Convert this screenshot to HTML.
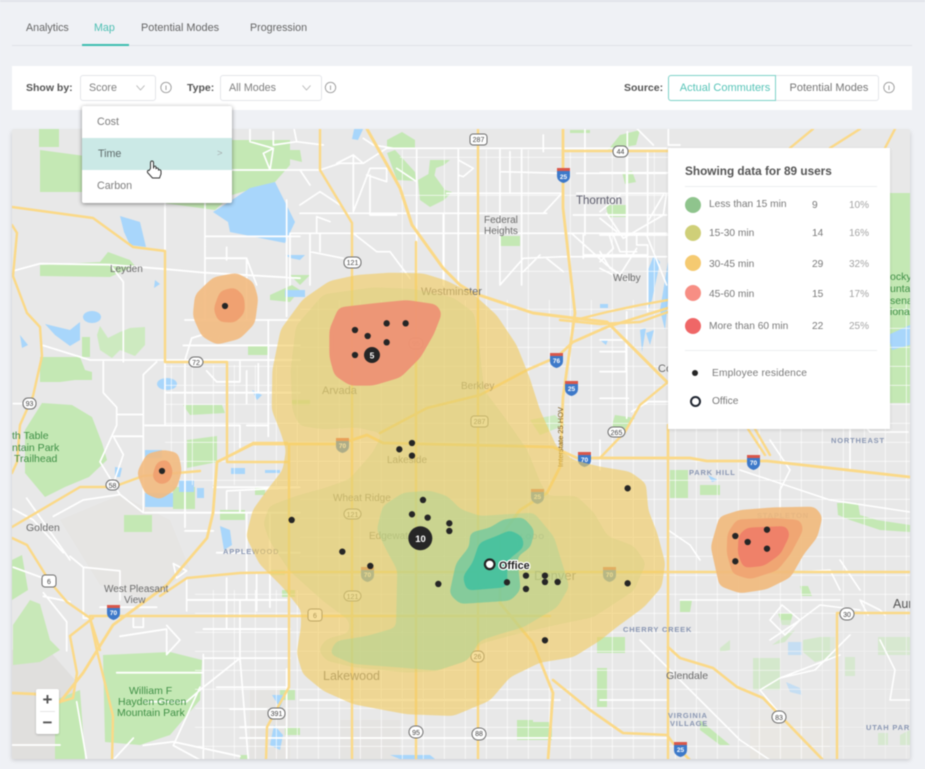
<!DOCTYPE html>
<html lang="en">
<head>
<meta charset="utf-8">
<title>Map</title>
<style>
html,body{margin:0;padding:0;background:#eff1f5;}
#page{position:relative;width:925px;height:769px;overflow:hidden;background:#eff1f5;font-family:"Liberation Sans",sans-serif;color:#666;filter:blur(.5px);}
#page div{position:absolute;white-space:nowrap;}
.topline{left:0;top:0;width:925px;height:2px;background:#e1e4e9;}
.tab{top:21px;font-size:10.7px;line-height:15px;color:#666;}
.tabline{left:12px;top:45px;width:900px;height:1px;background:#dfe2e7;}
.tabactive{left:82px;top:44px;width:47px;height:2px;background:#3dbdb0;}
.bar{left:12px;top:66px;width:900px;height:44px;background:#fff;}
.lbl{font-size:10.5px;font-weight:bold;color:#555;line-height:15px;top:81px;}
.sel{top:75px;height:24px;border:1px solid #e3e5e9;border-radius:3px;background:#fff;font-size:10.7px;line-height:24px;color:#808080;}
.btn{top:75px;height:24px;line-height:24px;font-size:11px;text-align:center;background:#fff;}
.menu{left:82px;top:106px;width:150px;height:97px;background:#fff;border-radius:2px;box-shadow:0 1px 4px rgba(0,0,0,.45);}
.mi{left:0;width:150px;height:32px;line-height:32px;font-size:10.7px;color:#7d7d7d;text-indent:15px;}
.panel{left:668px;top:148px;width:222px;height:281px;background:#fff;box-shadow:0 1px 3px rgba(0,0,0,.12);}
.t{font-size:10.2px;line-height:14px;color:#7a7a7a;}
.p{font-size:10px;line-height:14px;color:#a5a5a5;}
.zoom{left:36px;top:689px;width:23px;height:45px;background:#fff;border-radius:2px;box-shadow:0 1px 2px rgba(0,0,0,.2);}
svg{position:absolute;left:0;top:0;}
.s rect{fill:#fff;stroke:#6d6d6d;stroke-width:1;}
.s text{font-size:7px;fill:#444;text-anchor:middle;font-family:"Liberation Sans",sans-serif;}
.i text{font-size:6.5px;fill:#fff;text-anchor:middle;font-weight:bold;font-family:"Liberation Sans",sans-serif;}
.ml{font-family:"Liberation Sans",sans-serif;font-size:10px;fill:#6b6b6b;}
.hood{font-family:"Liberation Sans",sans-serif;font-size:7.5px;fill:#8a97b3;letter-spacing:.8px;font-weight:bold;}
.park{font-family:"Liberation Sans",sans-serif;font-size:10.5px;fill:#3f8f46;}
</style>
</head>
<body>
<div id="page">
<div class="topline"></div>
<div class="tab" style="left:26px">Analytics</div>
<div class="tab" style="left:94px;color:#4dbfb3">Map</div>
<div class="tab" style="left:141px;font-size:10.9px">Potential Modes</div>
<div class="tab" style="left:250px">Progression</div>
<div class="tabline"></div>
<div class="tabactive"></div>
<div class="bar"></div>
<div class="lbl" style="left:26px">Show by:</div>
<div class="sel" style="left:80px;width:74px;text-indent:8px">Score</div>
<div class="lbl" style="left:187px">Type:</div>
<div class="sel" style="left:220px;width:100px;text-indent:8px">All Modes</div>
<div class="lbl" style="left:624px">Source:</div>
<div class="btn" style="left:776px;width:102px;border:1px solid #e3e5e9;border-left:0;border-radius:0 3px 3px 0;color:#777;text-indent:4px">Potential Modes</div>
<div class="btn" style="left:668px;width:106px;border:1px solid #7fd2c8;border-radius:3px 0 0 3px;color:#57c4b8;text-indent:6px">Actual Commuters</div>

<svg width="925" height="769" viewBox="0 0 925 769" xmlns="http://www.w3.org/2000/svg">
<defs>
<clipPath id="mc"><rect x="12" y="129" width="898" height="630" rx="2"/></clipPath>
<pattern id="g1" width="21" height="19" patternUnits="userSpaceOnUse" x="3" y="5"><path d="M0 0H21M0 0V19" stroke="#fff" stroke-width="1.3" fill="none"/></pattern>
<pattern id="g2" width="42" height="38" patternUnits="userSpaceOnUse" x="24" y="5"><path d="M0 0H42M0 0V38" stroke="#fff" stroke-width="1.3" fill="none"/></pattern>
<filter id="sm" x="-10%" y="-10%" width="120%" height="120%"><feGaussianBlur stdDeviation="10"/><feComponentTransfer><feFuncA type="linear" slope="16" intercept="-7.5"/></feComponentTransfer></filter>
<filter id="shadow" x="-5%" y="-5%" width="110%" height="110%"><feDropShadow dx="0" dy="1" stdDeviation="2" flood-opacity=".18"/></filter>
</defs>

<!-- info icons -->
<g fill="none" stroke="#9a9a9a" stroke-width=".9">
<circle cx="166" cy="87.5" r="5.2"/><circle cx="330.5" cy="87.5" r="5.2"/><circle cx="889" cy="87.5" r="5.2"/>
<path d="M166 85.5V90M330.5 85.5V90M889 85.5V90"/>
<path d="M136.500 85.500L140.500 90L144.500 85.500M302.500 85.500L306.500 90L310.500 85.500" stroke="#b4b4b4"/>
</g>

<rect x="12" y="131" width="898" height="628" fill="#ddd" filter="url(#shadow)"/>
<g clip-path="url(#mc)">
<rect x="12" y="129" width="898" height="630" fill="#e8e8e8"/>
<!-- terrain -->
<path d="M12 650L40 640 75 680 70 759H12Z" fill="#e0dfdd"/>
<path d="M60 520L120 495 170 520 190 570 150 600 100 585Z" fill="#e6e5e3"/>
<rect x="250" y="690" width="40" height="69" fill="#e5e4e2"/>
<rect x="340" y="720" width="60" height="39" fill="#e5e4e2"/>
<rect x="750" y="700" width="80" height="59" fill="#e9e7e3"/>

<!-- green -->
<g fill="#c4e8b4">
<path d="M39 129H59V147H39ZM40 150L85 156 140 155 232 140H290V165L275 182 232 195 215 210 82 192H40Z"/>
<path d="M40 265L100 262 108 252 130 260 135 266 110 277 40 276Z"/>
<path d="M42 403L72 405 92 417 102 443 107 460 89 477 65 487 45 497 25 473 25 430Z"/>
<path d="M100 326L108 338 120 332 130 328 145 327V345L135 356 120 350 112 358 100 350 97 335Z" fill="#cdeac0"/>
<path d="M82 337H90V357H82Z"/>
<path d="M40 357H80L85 370 92 372V380H75L60 382H40Z"/>
<path d="M103 655L170 652 202 660 200 700 170 735 140 745 105 742Z"/>
<path d="M13 625L30 600 40 604 50 640 60 650 40 662 13 665Z" fill="#c8e8b8"/>
<path d="M55 700L80 690 85 759H55Z"/>
<path d="M12 560L22 555 28 590 12 600Z"/>
<path d="M187 440L217 436V462L187 468Z"/>
<path d="M173 487H195V509H173Z"/>
<path d="M124 515H152V532H124Z"/>
<path d="M248 345H268V355H248ZM183 405H222L225 413 190 415Z"/>
<path d="M290 275H310L300 285Z"/>
<!-- north parks -->
<path d="M387 140L402 132 415 140 415 148 387 148ZM387 153L397 180 416 181 415 172 395 150Z"/>
<path d="M418 180L432 172 445 190 452 192 444 200 430 207 420 200Z"/>
<path d="M430 160H450L444 165 436 168 434 178 428 178Z" />
<path d="M276 150H300L302 162 285 158Z"/>
<path d="M500 236H520V246H500Z"/>
<path d="M622 172L632 171 636 182 625 184Z"/>
<path d="M270 295L292 285 300 290 290 302 270 300Z"/>
<path d="M292 400H310V405H292Z"/>
<path d="M615 415L635 418 625 430 610 432Z"/>
<path d="M606 205H627V217H608Z"/>
<path d="M570 130H590V133H570ZM620 135L640 130 636 145 608 150Z"/>
<path d="M530 420L555 415 565 425 540 435Z" opacity=".8"/>
<!-- east -->
<path d="M670 470H688V498H670Z"/>
<path d="M837 503L858 503 860 515 877 520 910 525V532L880 530 850 520 838 515Z"/>
<path d="M800 586H808L812 596H802Z"/>
<path d="M778 613H793L790 625 782 625ZM772 645L790 632 795 630 785 642Z"/>
<path d="M720 648L730 640V650L720 652Z"/>
<path d="M803 640L820 637 835 637V657L815 662 803 652Z"/>
<path d="M753 658H780V690H753Z"/>
<path d="M878 637H910V655H878Z"/>
<path d="M845 657H855V676H845Z"/>
<path d="M700 720L730 745 720 745 700 730Z"/>
<path d="M878 733H888V745H878ZM900 735L910 730V745H900Z"/>
<path d="M890 193H910V403H890Z"/>
<path d="M680 600H692L690 612H680Z"/>
<path d="M597 637H625V653H597ZM597 668H607V707H597Z"/>
<path d="M517 720H533V740H517ZM533 722H552V740H533Z"/>
<path d="M280 690H295V700H280Z"/>
<path d="M285 728H300V735H285ZM240 755H248V759H240Z"/>
<path d="M220 510H245V520H220Z"/>
<path d="M255 488H265V495H255ZM282 590H295V597H282Z"/>
<path d="M700 485H720V495H700Z"/>
<path d="M270 570H285V575H270Z" opacity=".8"/>
</g>

<!-- water -->
<g fill="#a8d6fb">
<path d="M213 212L232 200 250 188 275 182 295 222 285 243 260 238 230 232 228 222Z"/>
<path d="M120 216L140 222 146 247 130 245 124 232Z"/>
<path d="M45 324L70 330 80 322 80 340 70 346 55 335Z"/>
<ellipse cx="92" cy="317" rx="9" ry="6"/>
<ellipse cx="167" cy="384" rx="10" ry="6"/>
<path d="M355 125H365L358 140 352 139Z"/>
<path d="M285 255H305L300 260 290 258Z"/>
<path d="M285 290H305V297H285Z"/>
<path d="M20 335L28 345 22 348Z"/>
<path d="M155 280L160 284 154 288Z"/>
<path d="M145 450H162V458H145ZM115 467L122 468 120 477 115 477ZM145 493H173V507H145ZM179 480H194V492H179ZM197 488H204V498H197Z"/>
<path d="M220 526L230 530 232 545 224 550Z"/>
<path d="M231 468H245V474H231ZM265 470H280V473H265Z"/>
<path d="M660 310L668 262V300L665 330ZM648 270L654 255 660 262 652 300 648 310Z"/>
<path d="M646 333L654 330 650 345ZM640 330L646 328 642 352Z"/>
<path d="M600 304H608V308H600ZM600 340L608 340 606 345Z"/>
<path d="M252 390L262 395 257 400Z"/>
<path d="M788 642H802V655H788ZM786 682L800 688 802 695 790 692Z"/>
<path d="M708 475L718 480 712 482Z"/>
<path d="M272 695H285L280 708ZM274 725L283 735 280 750 270 745Z"/>
<path d="M888 335L910 325V345L892 350Z"/>
<path d="M430 755H390L400 759H435Z"/>
</g>

<!-- white grid -->
<rect x="300" y="300" width="610" height="459" fill="url(#g1)"/>
<rect x="165" y="365" width="135" height="120" fill="url(#g1)"/>
<rect x="195" y="590" width="105" height="169" fill="url(#g1)"/>
<rect x="400" y="150" width="268" height="150" fill="url(#g2)"/>
<rect x="830" y="620" width="80" height="139" fill="#e8e8e8" opacity=".55"/>
<rect x="700" y="620" width="135" height="100" fill="#e8e8e8" opacity=".45"/>

<g fill="none" stroke="#fff" stroke-width="1.6" stroke-linejoin="round" stroke-linecap="round">
<!-- north -->
<g transform="translate(230,125) scale(.3333)" stroke-width="5">
<path d="M0 135H170L270 135 330 115 400 115 470 70H1310M60 0V50L130 70 120 135M130 20V60L200 50 190 0M200 50L280 60M120 135L100 85 130 70M210 135L240 180M320 115L370 90M400 115L370 90M370 90V260L420 130H470V170L410 150M400 40L430 60 490 70M210 240L270 200 330 240M180 325H1310M210 265H950M270 380V325M180 325V480M240 325V480M240 380L340 400M300 290L260 275 260 325M370 325L440 380 480 380 540 460M420 150V270L500 270M500 130L560 170M560 75V480M640 265V480M685 75V480M685 105L730 130 700 155 685 150M810 75V480M840 80V205M875 75V480M650 205H1000M810 140L1000 145M810 390V480L880 400 1000 395H1310M940 30V80M940 265L1000 200M1065 0V330M1190 70V390M1040 145H1310M1040 205H1310M1030 270H1310M1025 325L1130 420 1200 470M1130 265L1180 340 1300 270 1310 205M1060 390H1250M1060 330V400M1250 330L1310 480M950 400L1000 440M0 400H50L80 480M880 440L930 390"/>
</g>
<!-- top right panel side -->
<g transform="translate(600,125) scale(.3333)" stroke-width="5">
<path d="M0 143H205M0 205H205M82 20V330M143 80V330H205M145 0H100L160 60M0 260L60 210M0 330H205M190 210L143 290M110 330V360H143V560M28 330L40 370 0 410M80 560V880M0 645H78V740H0M0 680H80M0 820H85M95 860L145 830 205 830M0 380L30 430 60 450 110 370M0 430L40 450M40 330L60 380H110M0 280L50 320M205 10V60H240"/>
</g>
<!-- west -->
<g transform="translate(0,200) scale(.3333,.3636)" stroke-width="5">
<path d="M40 195L120 175 330 178 495 190 615 200 900 215M495 0V140M615 0V330M860 0V320M615 100H900M615 160H740V330M680 130V165M330 178L370 225 370 445M130 400L270 440H900M310 445V530L350 570V620L300 720M350 590H430M430 860V480L470 445M495 530H900M495 445V620M435 620H720V680M555 445V900M555 530V620M435 860H900M640 790H900M555 330H900M610 370L575 380 555 440M550 400H900M620 470L650 500H720V445M740 470V560M805 330V620M740 620H805V650M775 450V530M680 800V850M720 800V860M430 860L360 810 250 825 160 870M640 910H555M650 970H900M680 800L900 790M340 650H430M340 650L370 700 340 780M300 720L360 810M740 860V1100M810 860V1120M610 1250V1540M610 1260H870M720 1100V1270M610 1180H870M770 1030V1130M680 1040V1180M560 1040V1130M560 1100H860M430 1380H560L610 1340 720 1260M600 1340L520 1500 600 1540M430 1500L520 1490 720 1530M720 1260L745 1540M650 1340H860M690 1400H800M40 850L100 880 190 970M80 820L210 990M250 1010V1150H270M250 1010L360 1020V1100M300 1120H470M210 980L250 1010M130 1080L200 1160 200 1240M210 1105L130 1090M40 1010L130 1040M400 1150V1175H430V1150M500 1170L540 1210 500 1250 500 1180M360 1200L500 1180M520 1000L560 1020 530 1040ZM40 560H70M350 1300H610M230 1380L260 1540M400 1480L340 1540M860 1290V1540M720 1450H860"/>
</g>
<!-- south & east accents -->
<path d="M12 745H60M240 738H668M300 700H560M600 700H668" stroke-width="1.8"/>
<path d="M668 530L690 545 700 560M680 600H840M840 590L830 570 800 572M800 620L820 605 860 610M770 620L782 605 800 620 785 635 770 620ZM770 640L800 620M850 635L815 670 780 678 760 690M780 678L840 655M760 690L785 720M840 560L860 590M868 615L860 600 880 610 885 615M890 700H910M880 640L895 670 890 700M670 670L740 740 770 760M640 640L700 700M740 470L830 500 910 512M770 440L790 470 780 490V515M600 440V470M908 432H870L860 420M850 429V470"/>
</g>

<!-- yellow roads -->
<g fill="none" stroke="#fbd987" stroke-width="2.400" stroke-linejoin="round" stroke-linecap="round">
<path d="M12 207L93 218 133 247 165 251V362H227V462H287"/>
<path d="M12 225L17 233 13 276 27 313 40 327 42 356 33 396 20 425 17 462 12 473"/>
<path d="M12 527L80 487H113L143 476 200 471"/>
<path d="M12 538L27 545 50 582 67 602 90 618 97 651 113 716 112 760"/>
<path d="M12 693L35 694 60 702 83 673 113 625 167 585 207 538 213 513 217 462 253 444H340L367 435 383 443 553 447 577 458H690L707 461H767L910 477" stroke-width="2.800"/>
<path d="M240 450L253 443H287"/>
<path d="M90 616H550"/>
<path d="M160 596L187 578 240 573 300 572H910"/>
<path d="M70 636L93 618M70 636L77 673 73 698 60 702M90 618L100 650"/>
<path d="M289 445V687L267 727 266 760"/>
<path d="M320 129V170L352 223V760"/>
<path d="M367 129L400 188 412 225 443 268 460 285 473 293 533 313 573 318 607 322 667 382" stroke-width="3"/>
<path d="M416 242V760M478 129V760"/>
<path d="M563 129V208L575 313 563 397 560 467 547 493 520 510 500 537V603L533 643 553 693 548 760" stroke-width="2.800"/>
<path d="M563 151H668"/>
<path d="M668 308L607 327 573 342 557 357 527 370 480 395 427 408 380 433" stroke-width="2.600"/>
<path d="M668 312L640 322 600 324 560 320M668 300L640 305 607 312 575 320"/>
<path d="M668 429V760"/>
<path d="M668 647L680 658 713 668 737 687 763 698 823 760M553 680L590 710 623 733 667 735 673 743 690 760" stroke-width="2.600"/>
<path d="M910 613H837V760"/>
<path d="M668 382L640 405 625 432 600 458M668 425L668 460"/>
<path d="M813 129L790 148M860 129L830 148M895 129L885 148"/>
<path d="M748 429L765 455M755 429L770 455"/>
</g>

<!-- map labels -->
<text class="ml" x="576" y="204" style="font-size:11.500px;fill:#5b5b6b">Thornton</text>
<text class="ml" x="613" y="281">Welby</text>
<text class="ml" x="484" y="223">Federal</text>
<text class="ml" x="484" y="234">Heights</text>
<text class="ml" x="110" y="272" style="font-size:10px">Leyden</text>
<text class="ml" x="26" y="531" style="font-size:10.500px">Golden</text>
<text class="ml" x="104" y="592">West Pleasant</text>
<text class="ml" x="124" y="603">View</text>
<text class="ml" x="658" y="372" style="font-size:11px">Co</text>
<text class="ml" x="893" y="608" style="font-size:12.500px;fill:#555">Aur</text>
<text class="ml" x="666" y="679" style="font-size:10.500px">Glendale</text>
<text class="park" x="129" y="694">William F</text>
<text class="park" x="118" y="705">Hayden Green</text>
<text class="park" x="117" y="716">Mountain Park</text>
<text class="park" x="12" y="439">th Table</text>
<text class="park" x="12" y="451">ntain Park</text>
<text class="park" x="14" y="462">Trailhead</text>
<text class="park" x="890" y="280">ocky</text>
<text class="park" x="890" y="292">untai</text>
<text class="park" x="890" y="304">senal</text>
<text class="park" x="890" y="315">ional</text>
<text class="hood" x="689" y="475">PARK HILL</text>
<text class="hood" x="831" y="443">NORTHEAST</text>
<text class="hood" x="623" y="632">CHERRY CREEK</text>
<text class="hood" x="668" y="718">VIRGINIA</text>
<text class="hood" x="670" y="726">VILLAGE</text>
<text class="hood" x="866" y="730">UTAH PARK</text>
<text class="hood" x="223" y="554">APPLEWOOD</text>
<text class="hood" x="757" y="518">STAPLETON</text>
<text class="hood" x="520" y="539">LODO</text>
<text class="ml" x="421" y="295" style="font-size:11px">Westminster</text>
<text class="ml" x="322" y="394" style="font-size:11px">Arvada</text>
<text class="ml" x="461" y="389">Berkley</text>
<text class="ml" x="387" y="463">Lakeside</text>
<text class="ml" x="333" y="501">Wheat Ridge</text>
<text class="ml" x="369" y="539">Edgewater</text>
<text class="ml" x="534" y="580" style="font-size:13px">Denver</text>
<text class="ml" x="323" y="680" style="font-size:12.500px">Lakewood</text>
<text x="0" y="0" transform="translate(563,437) rotate(-90) translate(-30,0)" style="font-family:'Liberation Sans',sans-serif;font-size:7.500px;fill:#7a5c20">Interstate 25 HOV</text>

<!-- shields -->
<g class="s">
<rect x="470" y="134" width="17" height="11" rx="3"/><text x="478.500" y="142">287</text>
<rect x="613" y="146" width="15" height="11" rx="5"/><text x="620.500" y="154">44</text>
<rect x="344" y="257" width="17" height="11" rx="5"/><text x="352.500" y="265">121</text>
<rect x="189" y="357" width="14" height="10" rx="5"/><text x="196" y="365">72</text>
<rect x="23" y="398" width="13" height="11" rx="5"/><text x="29.500" y="406">93</text>
<rect x="106" y="480" width="13" height="10" rx="5"/><text x="112.500" y="488">58</text>
<rect x="42" y="575" width="14" height="12" rx="3"/><text x="49" y="584">6</text>
<rect x="268" y="708" width="17" height="11" rx="5"/><text x="276.500" y="716">391</text>
<rect x="409" y="726" width="14" height="12" rx="6"/><text x="416" y="735">95</text>
<rect x="472" y="728" width="14" height="12" rx="6"/><text x="479" y="736">88</text>
<rect x="772" y="711" width="14" height="12" rx="6"/><text x="779" y="720">83</text>
<rect x="840" y="608" width="14" height="12" rx="6"/><text x="847" y="617">30</text>
<rect x="608" y="427" width="17" height="10" rx="5"/><text x="616.500" y="435">265</text>
<rect x="471" y="416" width="17" height="11" rx="3"/><text x="479.500" y="424">287</text>
<rect x="344" y="509" width="17" height="10" rx="5"/><text x="352.500" y="517">121</text>
<rect x="344" y="591" width="17" height="10" rx="5"/><text x="352.500" y="599">121</text>
<rect x="409" y="338" width="14" height="11" rx="5"/><text x="416" y="346">95</text>
<rect x="308" y="609" width="14" height="12" rx="3"/><text x="315" y="618">6</text>
<rect x="471" y="651" width="13" height="11" rx="5"/><text x="477.500" y="659">26</text>
</g>
<g class="i">
<g><path d="M557 168H570V176Q570 181 563.500 183 557 181 557 176Z" fill="#3d79c9"/><rect x="557" y="168" width="13" height="3" fill="#d9574a"/><text x="563.500" y="179">25</text></g>
<g><path d="M550 353H563V361Q563 366 556.500 368 550 366 550 361Z" fill="#3d79c9"/><rect x="550" y="353" width="13" height="3" fill="#d9574a"/><text x="556.500" y="363">76</text></g>
<g><path d="M565 381H578V389Q578 394 571.500 396 565 394 565 389Z" fill="#3d79c9"/><rect x="565" y="381" width="13" height="3" fill="#d9574a"/><text x="571.500" y="391">25</text></g>
<g><path d="M336 438H349V446Q349 451 342.500 453 336 451 336 446Z" fill="#3d79c9"/><rect x="336" y="438" width="13" height="3" fill="#d9574a"/><text x="342.500" y="448">70</text></g>
<g><path d="M578 452H591V460Q591 465 584.500 467 578 465 578 460Z" fill="#3d79c9"/><rect x="578" y="452" width="13" height="3" fill="#d9574a"/><text x="584.500" y="462">70</text></g>
<g><path d="M747 455H760V463Q760 468 753.500 470 747 468 747 463Z" fill="#3d79c9"/><rect x="747" y="455" width="13" height="3" fill="#d9574a"/><text x="753.500" y="465">70</text></g>
<g><path d="M531 489H544V497Q544 502 537.500 504 531 502 531 497Z" fill="#3d79c9"/><rect x="531" y="489" width="13" height="3" fill="#d9574a"/><text x="537.500" y="499">25</text></g>
<g><path d="M361 567H374V575Q374 580 367.500 582 361 580 361 575Z" fill="#3d79c9"/><rect x="361" y="567" width="13" height="3" fill="#d9574a"/><text x="367.500" y="577">70</text></g>
<g><path d="M603 567H616V575Q616 580 609.500 582 603 580 603 575Z" fill="#3d79c9"/><rect x="603" y="567" width="13" height="3" fill="#d9574a"/><text x="609.500" y="577">70</text></g>
<g><path d="M107 605H120V613Q120 618 113.500 620 107 618 107 613Z" fill="#3d79c9"/><rect x="107" y="605" width="13" height="3" fill="#d9574a"/><text x="113.500" y="615">70</text></g>
<g><path d="M674 742H687V750Q687 755 680.500 757 674 755 674 750Z" fill="#3d79c9"/><rect x="674" y="742" width="13" height="3" fill="#d9574a"/><text x="680.500" y="752">25</text></g>
</g>

<!-- heat layers: central -->
<g transform="translate(240,270) scale(.3333)">
<g filter="url(#sm)" opacity=".62"><path fill="#f2cc62" d="M350 15L450 8 550 10 620 32 700 72 770 135 830 225 868 320 900 420 950 530 1000 570 1080 590 1170 605 1218 640 1225 720 1252 790 1276 880 1265 952 1212 1012 1130 1072 1080 1112 1000 1162 900 1178 810 1222 750 1292 640 1338 500 1333 340 1303 250 1263 188 1212 170 1150 183 1070 183 1020 128 952 58 882 18 800 38 720 83 658 128 600 138 540 123 490 95 420 97 300 122 178 188 88 268 33Z"/></g>
<g filter="url(#sm)" opacity=".3"><path fill="#cfd07a" d="M250 73L400 52 520 57 640 83 702 128 718 230 732 360 792 440 862 540 902 640 925 678 1010 678 1062 728 1102 798 1182 828 1218 880 1182 962 1060 1042 960 1062 830 1092 720 1122 682 1172 590 1204 500 1208 340 1192 258 1172 235 1140 258 1108 328 1088 328 1052 248 992 148 902 88 812 70 760 88 708 168 678 258 653 328 628 398 548 428 490 350 472 250 478 178 467 157 420 152 300 168 168Z"/></g>
<g filter="url(#sm)" opacity=".42"><path fill="#a4d596" d="M490 668L570 662 622 678 662 718 720 738 800 733 882 728 942 800 988 950 952 1012 850 1072 780 1092 720 1112 682 1172 590 1202 470 1192 340 1182 268 1152 288 1113 380 1098 468 1073 472 900 440 842 410 780 428 708Z"/></g>
<g filter="url(#sm)" opacity=".7"><path fill="#68c8a0" d="M690 788L750 773 790 748 850 742 884 780 872 832 832 860 842 960 812 992 660 1002 628 972 648 880 688 830Z"/></g>
<g filter="url(#sm)" opacity=".75"><path fill="#38c0a0" d="M718 818L770 798 810 780 848 800 852 832 802 872 802 952 680 962 668 920 698 878Z"/></g>
<g filter="url(#sm)" opacity=".92"><path fill="#ee9174" d="M296 112L400 100 500 90 590 103 606 130 582 192 542 262 482 322 400 347 330 347 283 316 268 260 268 178Z"/></g>
</g>
<!-- heat layers: west -->
<g transform="translate(0,200) scale(.3333,.3636)">
<g filter="url(#sm)" opacity=".9"><path fill="#f3bb80" d="M640 212L710 200 760 225 775 270 765 340 720 382 650 398 605 375 578 320 585 260Z"/></g>
<g filter="url(#sm)" opacity=".95"><path fill="#f0a06f" d="M660 250L705 240 733 265 735 310 705 338 655 335 640 300Z"/></g>
<g filter="url(#sm)" opacity=".9"><path fill="#f3bb80" d="M440 698L490 687 535 695 546 745 530 795 480 824 435 808 410 750Z"/></g>
<g filter="url(#sm)" opacity=".95"><path fill="#f0a06f" d="M470 720L505 713 520 745 510 775 480 784 455 765Z"/></g>
</g>
<!-- heat layers: east -->
<g transform="translate(640,420) scale(.3333)">
<g filter="url(#sm)" opacity=".9"><path fill="#f1ba7c" d="M212 380L238 290 300 270 400 262 525 260 548 290 532 352 492 402 452 472 380 508 300 520 238 498Z"/></g>
<g filter="url(#sm)" opacity=".9"><path fill="#f0a472" d="M262 340L290 298 400 294 482 300 490 330 452 402 412 452 330 478 278 462 260 400Z"/></g>
<g filter="url(#sm)" opacity=".95"><path fill="#ef8069" d="M296 345L320 323 440 318 450 345 422 402 372 438 310 444 293 400Z"/></g>
</g>

<!-- dots -->
<g fill="#262626">
<circle cx="225" cy="306" r="3.100"/><circle cx="162" cy="471" r="3.100"/>
<g transform="translate(240,270) scale(.3333)">
<circle cx="345" cy="180" r="9.500"/><circle cx="383" cy="198" r="9.500"/><circle cx="440" cy="160" r="9.500"/><circle cx="497" cy="160" r="9.500"/><circle cx="440" cy="217" r="9.500"/><circle cx="345" cy="255" r="9.500"/>
<circle cx="396" cy="255" r="24"/>
<circle cx="516" cy="519" r="9.500"/><circle cx="478" cy="538" r="9.500"/><circle cx="516" cy="557" r="9.500"/>
<circle cx="549" cy="690" r="9.500"/><circle cx="516" cy="733" r="9.500"/><circle cx="563" cy="743" r="9.500"/><circle cx="628" cy="760" r="9.500"/><circle cx="628" cy="783" r="9.500"/>
<circle cx="541" cy="805" r="36"/>
<circle cx="155" cy="750" r="9.500"/><circle cx="307" cy="845" r="9.500"/><circle cx="391" cy="888" r="9.500"/><circle cx="595" cy="942" r="9.500"/><circle cx="801" cy="937" r="9.500"/><circle cx="858" cy="917" r="9.500"/><circle cx="858" cy="957" r="9.500"/><circle cx="915" cy="917" r="9.500"/><circle cx="915" cy="936" r="9.500"/><circle cx="953" cy="936" r="9.500"/><circle cx="1163" cy="655" r="9.500"/><circle cx="1163" cy="940" r="9.500"/><circle cx="915" cy="1111" r="9.500"/>
</g>
<g transform="translate(640,420) scale(.3333)">
<circle cx="286" cy="348" r="9.500"/><circle cx="323" cy="366" r="9.500"/><circle cx="381" cy="329" r="9.500"/><circle cx="381" cy="386" r="9.500"/><circle cx="286" cy="424" r="9.500"/>
</g>
</g>
<text x="372" y="358.500" text-anchor="middle" style="font-family:'Liberation Sans',sans-serif;font-size:8.500px;font-weight:bold;fill:#fff">5</text>
<text x="420.500" y="542" text-anchor="middle" style="font-family:'Liberation Sans',sans-serif;font-size:9.500px;font-weight:bold;fill:#fff">10</text>
<circle cx="489.700" cy="564.300" r="4.800" fill="#fff" stroke="#222" stroke-width="2.200"/>
<text x="499" y="569" style="font-family:'Liberation Sans',sans-serif;font-size:10.800px;font-weight:bold;fill:#1e1e1e;stroke:#fff;stroke-width:2.500px;paint-order:stroke;stroke-linejoin:round">Office</text>
</g>
</svg>

<div class="menu">
  <div class="mi" style="top:0;padding-top:0">Cost</div>
  <div class="mi" style="top:32px;background:#cbe9e6;color:#5f6b6b;text-indent:16px">Time</div>
  <div class="mi" style="top:64px">Carbon</div>
  <div style="left:135px;top:40px;font-size:9.500px;line-height:16px;color:#a5adad">&gt;</div>
</div>

<svg width="925" height="769" viewBox="0 0 925 769" style="pointer-events:none">
<path d="M150.500 168.500V163Q150.500 161 152 161 153.500 161 153.500 163V168.500L153.800 166.500Q155.500 165.600 156 167V168.500Q157.800 167.400 158.500 169V170Q160.500 169.300 161 171V174L159.500 178H152.500L147.500 172.500Q147 170 149 170.500Z" fill="#fff" stroke="#333" stroke-width="1"/>
</svg>

<div class="panel">
  <div style="left:17px;top:15px;font-size:11.800px;font-weight:bold;line-height:16px;color:#555">Showing data for 89 users</div>
  <div style="left:17px;top:38px;width:192px;height:1px;background:#eceef0"></div>
  <div style="left:17px;top:49px;width:16px;height:16px;border-radius:50%;background:#8fc48d"></div>
  <div class="t" style="left:41px;top:50px">Less than 15 min</div><div class="t" style="left:144px;top:51px">9</div><div class="p" style="left:181px;top:51px">10%</div>
  <div style="left:17px;top:77px;width:16px;height:16px;border-radius:50%;background:#cfcf78"></div>
  <div class="t" style="left:41px;top:79px">15-30 min</div><div class="t" style="left:144px;top:79px">14</div><div class="p" style="left:181px;top:79px">16%</div>
  <div style="left:17px;top:107px;width:16px;height:16px;border-radius:50%;background:#f5ca71"></div>
  <div class="t" style="left:41px;top:110px">30-45 min</div><div class="t" style="left:144px;top:110px">29</div><div class="p" style="left:181px;top:110px">32%</div>
  <div style="left:17px;top:137px;width:16px;height:16px;border-radius:50%;background:#f78e84"></div>
  <div class="t" style="left:41px;top:140px">45-60 min</div><div class="t" style="left:144px;top:140px">15</div><div class="p" style="left:181px;top:140px">17%</div>
  <div style="left:17px;top:170px;width:16px;height:16px;border-radius:50%;background:#ef6767"></div>
  <div class="t" style="left:41px;top:172px">More than 60 min</div><div class="t" style="left:144px;top:172px">22</div><div class="p" style="left:181px;top:172px">25%</div>
  <div style="left:17px;top:202px;width:192px;height:1px;background:#eceef0"></div>
  <div style="left:24px;top:222px;width:6px;height:6px;border-radius:50%;background:#262626"></div>
  <div class="t" style="left:44px;top:219px;letter-spacing:.15px">Employee residence</div>
  <div style="left:22px;top:248px;width:7px;height:7px;border-radius:50%;border:2.500px solid #1f2530;background:#fff"></div>
  <div class="t" style="left:44px;top:247px">Office</div>
</div>

<div class="zoom">
  <div style="left:0;top:0;width:23px;height:22px;text-align:center;font-size:17px;font-weight:bold;line-height:22px;color:#555">+</div>
  <div style="left:4px;top:22px;width:15px;height:1px;background:#e6e6e6"></div>
  <div style="left:0;top:23px;width:23px;height:22px;text-align:center;font-size:17px;font-weight:bold;line-height:21px;color:#555">−</div>
</div>
</div>
</body>
</html>
